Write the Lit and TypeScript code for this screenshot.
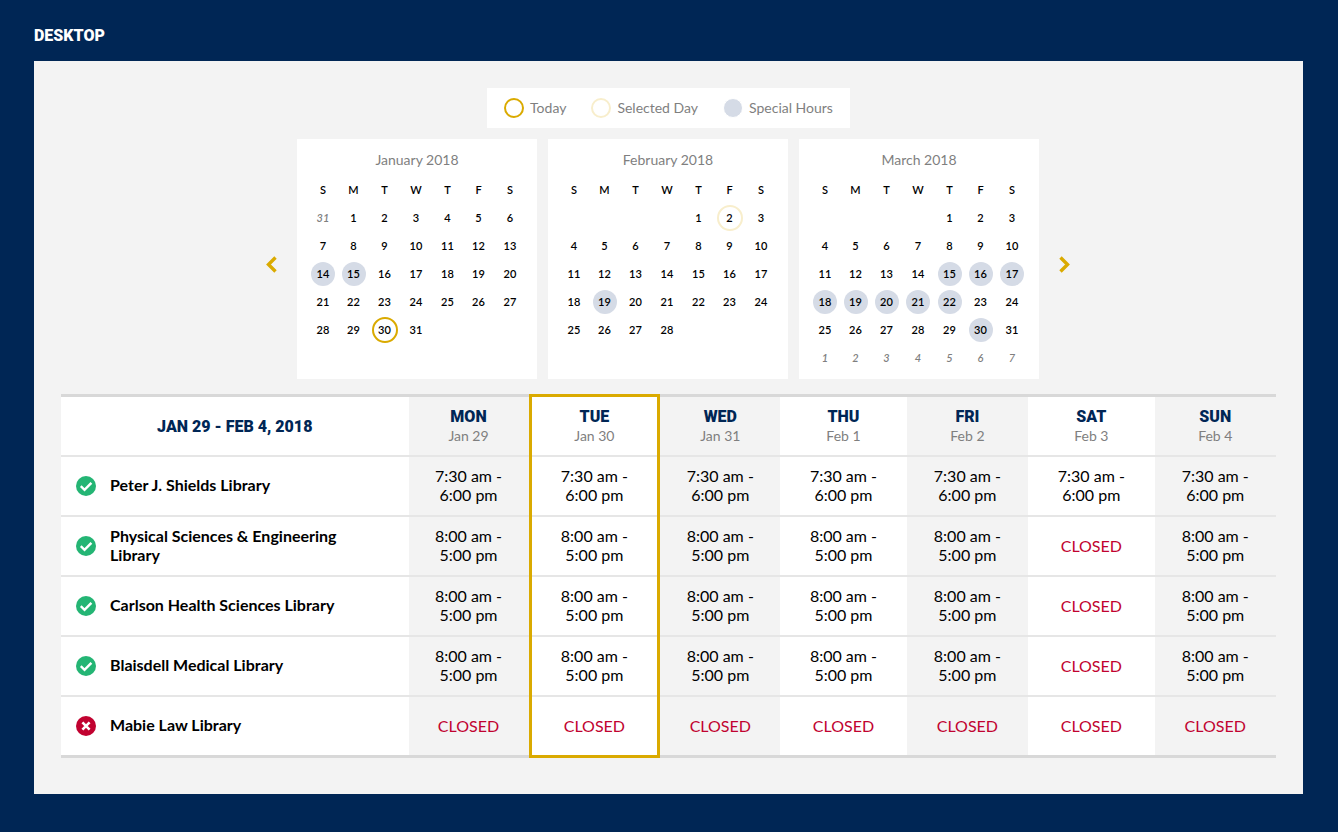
import { LitElement, html, css, svg } from "lit";
import { customElement, property } from "lit/decorators.js";
import { classMap } from "lit/directives/class-map.js";

interface Month {
  name: string;
  lead: number;
  days: number;
  before?: number[];
  after?: number[];
  special?: number[];
  today?: number;
  selected?: number;
}

const MONTHS: Month[] = [
  { name: "January 2018", lead: 1, days: 31, before: [31], special: [14, 15], today: 30 },
  { name: "February 2018", lead: 4, days: 28, special: [19], selected: 2 },
  {
    name: "March 2018",
    lead: 4,
    days: 31,
    after: [1, 2, 3, 4, 5, 6, 7],
    special: [15, 16, 17, 18, 19, 20, 21, 22, 30],
  },
];

const WEEK = [
  { name: "Mon", date: "Jan 29", col: "grey" },
  { name: "Tue", date: "Jan 30", col: "today" },
  { name: "Wed", date: "Jan 31", col: "grey" },
  { name: "Thu", date: "Feb 1", col: "white" },
  { name: "Fri", date: "Feb 2", col: "grey" },
  { name: "Sat", date: "Feb 3", col: "white" },
  { name: "Sun", date: "Feb 4", col: "grey" },
];

const early = ["7:30 am -", "6:00 pm"];
const day = ["8:00 am -", "5:00 pm"];
const closed: string[] = [];

const LIBRARIES = [
  { name: "Peter J. Shields Library", open: true, hours: [early, early, early, early, early, early, early] },
  { name: "Physical Sciences & Engineering Library", open: true, hours: [day, day, day, day, day, closed, day] },
  { name: "Carlson Health Sciences Library", open: true, hours: [day, day, day, day, day, closed, day] },
  { name: "Blaisdell Medical Library", open: true, hours: [day, day, day, day, day, closed, day] },
  { name: "Mabie Law Library", open: false, hours: [closed, closed, closed, closed, closed, closed, closed] },
];

@customElement("month-card")
class MonthCard extends LitElement {
  @property({ attribute: false }) month!: Month;

  static styles = css`
    :host {
      display: block;
      background: #fff;
      padding: 11px 11px 7px;
    }
    table {
      table-layout: fixed;
      width: 218px;
      border-collapse: collapse;
      font-family: "Lato Semibold", Lato, "Open Sans", sans-serif;
      font-size: 11px;
      line-height: 24px;
      font-weight: 600;
      color: #000;
    }
    caption {
      height: 26px;
      font-family: Lato, "Open Sans", sans-serif;
      font-size: 14px;
      line-height: 19px;
      font-weight: 400;
      color: #7f7f7f;
    }
    .narrow { width: 30px; }
    .mid { width: 31px; }
    .wide { width: 32px; }
    th,
    td {
      height: 28px;
      padding: 0;
      text-align: center;
      font-weight: inherit;
    }
    .day {
      box-sizing: border-box;
      display: block;
      width: 26px;
      height: 26px;
      margin: 0 auto;
      padding: 0;
      border: 2px solid transparent;
      border-radius: 50%;
      background: none;
      color: inherit;
      font: inherit;
      line-height: 22px;
      cursor: pointer;
    }
    .special {
      width: 24px;
      height: 24px;
      border: 0;
      line-height: 24px;
      background: #d5dbe6;
    }
    .today { border-color: #daaa00; }
    .selected { border-color: #f8eecc; }
    .outside {
      color: #7f7f7f;
      font-style: italic;
    }
  `;

  render() {
    const m = this.month;
    const cells: { n: number | null; outside: boolean }[] = [];
    for (let i = 0; i < m.lead; i++) cells.push({ n: m.before?.[i] ?? null, outside: true });
    for (let n = 1; n <= m.days; n++) cells.push({ n, outside: false });
    for (const n of m.after ?? []) cells.push({ n, outside: true });
    while (cells.length < 42) cells.push({ n: null, outside: true });
    const rows = [0, 1, 2, 3, 4, 5].map((r) => cells.slice(r * 7, r * 7 + 7));

    return html`
      <table>
        <caption>${m.name}</caption>
        <colgroup>
          ${["narrow", "mid", "mid", "wide", "mid", "mid", "wide"].map((c) => html`<col class=${c} />`)}
        </colgroup>
        <thead>
          <tr>${["S", "M", "T", "W", "T", "F", "S"].map((d) => html`<th scope="col">${d}</th>`)}</tr>
        </thead>
        <tbody>
          ${rows.map(
            (row) => html`<tr>
              ${row.map(({ n, outside }) =>
                n === null
                  ? html`<td></td>`
                  : html`<td><button type="button" class=${classMap({
                      day: true,
                      outside,
                      special: !outside && !!m.special?.includes(n),
                      today: !outside && m.today === n,
                      selected: !outside && m.selected === n,
                    })}>${n}</button></td>`
              )}
            </tr>`
          )}
        </tbody>
      </table>
    `;
  }
}

@customElement("app-root")
class AppRoot extends LitElement {
  static styles = css`
    :host {
      display: block;
      box-sizing: border-box;
      min-height: 100vh;
      padding: 26px 35px 38px 34px;
      background: #002655;
      color: #000;
      font-family: Lato, "Open Sans", sans-serif;
    }
    .title {
      margin: 0 0 15px;
      font-family: Roboto, Lato, sans-serif;
      font-size: 16px;
      line-height: 20px;
      font-weight: 900;
      color: #fff;
    }
    .panel {
      padding: 27px 27px 36px;
      background: #f3f3f3;
    }
    .legend {
      display: flex;
      align-items: center;
      gap: 25px;
      width: fit-content;
      height: 40px;
      margin: 0 auto 11px;
      padding: 0 17px;
      background: #fff;
      color: #7f7f7f;
      font-size: 14px;
      line-height: 20px;
      list-style: none;
    }
    .key {
      display: flex;
      align-items: center;
      gap: 6px;
    }
    .dot {
      box-sizing: border-box;
      width: 20px;
      height: 20px;
      border: 2px solid #daaa00;
      border-radius: 50%;
    }
    .dot.selected { border-color: #f8eecc; }
    .dot.special {
      border: 1px solid #fff;
      background: #d5dbe6;
    }
    .calendars {
      display: flex;
      justify-content: center;
      align-items: center;
      gap: 20px;
      margin-bottom: 15px;
      padding-right: 1px;
    }
    .months {
      display: flex;
      gap: 11px;
    }
    .arrow {
      display: block;
      margin-top: 10px;
      padding: 0;
      border: 0;
      background: none;
      cursor: pointer;
    }
    .arrow svg,
    .status {
      display: block;
      flex: none;
    }
    .hours {
      table-layout: fixed;
      width: 100%;
      border-collapse: collapse;
      border: solid #d8d8d8;
      border-width: 3px 0;
      font-size: 16px;
      line-height: 19px;
    }
    .label { background: #fff; }
    .grey {
      width: 10%;
      background: #f3f3f3;
    }
    .white {
      width: 10.4%;
      background: #fff;
    }
    .today {
      width: 10.6%;
      border: 3px solid #daaa00;
      background: #fff;
    }
    .hours tr { height: 60px; }
    .hours tbody tr:last-child { height: 61px; }
    .hours tbody tr { border-top: 2px solid #e6e6e6; }
    .hours th,
    .hours td {
      padding: 0 0 2px;
      text-align: center;
      vertical-align: middle;
      font-weight: 400;
    }
    .hours tbody th,
    .hours .closed {
      padding: 0;
    }
    .hours .range { padding: 2px 0 0; }
    .hours .range,
    .weekday {
      color: #002655;
      font-family: Roboto, Lato, sans-serif;
      font-weight: 900;
      text-transform: uppercase;
    }
    .weekday,
    .date { display: block; }
    .weekday { line-height: 21px; }
    .date {
      color: #7f7f7f;
      font-size: 14px;
      line-height: 17px;
    }
    .library {
      display: flex;
      align-items: center;
      gap: 14px;
      padding: 0 40px 0 15px;
      text-align: left;
      font-weight: 700;
    }
    .name { padding-bottom: 2px; }
    .closed { color: #c10230; }
  `;

  private chevron(points: string) {
    return html`<svg width="11" height="17" viewBox="0 0 11 17" fill="none" stroke="#daaa00" stroke-width="3.4" aria-hidden="true"><polyline points=${points}></polyline></svg>`;
  }

  private status(open: boolean) {
    return html`<svg class="status" width="20" height="20" viewBox="0 0 20 20" fill="none" role="img" aria-label=${open ? "Open" : "Closed"}>
      <circle cx="10" cy="10" r="10" fill=${open ? "#24b574" : "#c10230"}></circle>
      ${open
        ? svg`<path d="M4.8 10.2 L8.5 13.8 L15.4 6.8" stroke="#fff" stroke-width="2.4"></path>`
        : svg`<path d="M6.4 6.4 L13.6 13.6 M13.6 6.4 L6.4 13.6" stroke="#fff" stroke-width="2.6"></path>`}
    </svg>`;
  }

  render() {
    return html`
      <h1 class="title">DESKTOP</h1>
      <main class="panel">
        <ul class="legend">
          <li class="key"><span class="dot"></span>Today</li>
          <li class="key"><span class="dot selected"></span>Selected Day</li>
          <li class="key"><span class="dot special"></span>Special Hours</li>
        </ul>
        <section class="calendars">
          <button class="arrow" type="button" aria-label="Previous months">${this.chevron("9.5,1.5 2.5,8.5 9.5,15.5")}</button>
          <div class="months">
            ${MONTHS.map((m) => html`<month-card .month=${m}></month-card>`)}
          </div>
          <button class="arrow" type="button" aria-label="Next months">${this.chevron("1.5,1.5 8.5,8.5 1.5,15.5")}</button>
        </section>
        <table class="hours">
          <colgroup>
            <col class="label" />
            ${WEEK.map((d) => html`<col class=${d.col} />`)}
          </colgroup>
          <thead>
            <tr>
              <th class="range" scope="col">Jan 29 - Feb 4, 2018</th>
              ${WEEK.map(
                (d) => html`<th scope="col">
                  <span class="weekday">${d.name}</span><span class="date">${d.date}</span>
                </th>`
              )}
            </tr>
          </thead>
          <tbody>
            ${LIBRARIES.map(
              (lib) => html`<tr>
                <th scope="row"><div class="library">${this.status(lib.open)}<span class="name">${lib.name}</span></div></th>
                ${lib.hours.map((h) =>
                  h.length
                    ? html`<td>${h[0]}<br />${h[1]}</td>`
                    : html`<td class="closed">CLOSED</td>`
                )}
              </tr>`
            )}
          </tbody>
        </table>
      </main>
    `;
  }
}
